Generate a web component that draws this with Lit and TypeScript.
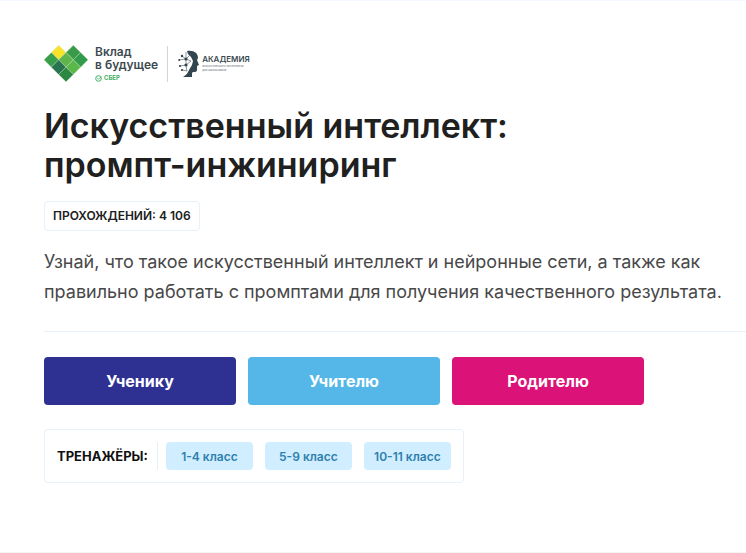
import { LitElement, html, svg, css } from "lit";
import { customElement } from "lit/decorators.js";

const CELLS: [number, number, string][] = [
  [15, 7, "#f6e32a"],
  [29, 7, "#3a9a4a"],
  [8, 14, "#3a9f4b"],
  [22, 14, "#5fb44c"],
  [36, 14, "#319a4b"],
  [15, 21, "#2a7350"],
  [29, 21, "#5ab74a"],
  [22, 28, "#2b8842"],
];

const AUDIENCE = [
  { label: "Ученику", tone: "student" },
  { label: "Учителю", tone: "teacher" },
  { label: "Родителю", tone: "parent" },
];

const TRAINERS = ["1-4 класс", "5-9 класс", "10-11 класс"];

@customElement("app-logos")
export class AppLogos extends LitElement {
  static styles = css`
    :host {
      display: flex;
      align-items: center;
      color: #3c4a50;
      font-family: Inter, "Noto Sans", sans-serif;
    }
    svg { display: block; flex: none; }
    .vklad { margin-left: 7px; font-size: 12px; line-height: 13px; font-weight: 600; }
    .sber { display: flex; align-items: center; gap: 2px; margin-top: 3px; font-size: 6px; line-height: 8px; font-weight: 700; color: #3fae62; }
    .bar { width: 1px; height: 36px; margin: 0 10px 0 9px; background: #d3d6d8; }
    .academy { margin-left: 2px; font-size: 8px; line-height: 9px; font-weight: 600; }
    .tiny { font-size: 3px; line-height: 4px; font-weight: 500; color: #7b858a; }
  `;

  render() {
    return html`
      <svg width="44" height="37" viewBox="1 0 42 35" aria-hidden="true">
        ${CELLS.map(
          ([x, y, c]) =>
            svg`<path d="M${x} ${y - 7}l7 7-7 7-7-7z" fill=${c} stroke="#cfe6c8" stroke-width=".3"></path>`
        )}
      </svg>
      <div class="vklad">
        <div>Вклад</div>
        <div>в будущее</div>
        <div class="sber">
          <svg width="7" height="7" viewBox="0 0 7 7" aria-hidden="true">
            <circle cx="3.5" cy="3.5" r="2.8" fill="none" stroke="#3fae62" stroke-width="1"></circle>
            <path d="M2 3l1.5 1L6.5 2" fill="none" stroke="#3fae62" stroke-width=".8"></path>
          </svg>
          СБЕР
        </div>
      </div>
      <div class="bar"></div>
      <svg width="22" height="28" viewBox="0 0 22 28" aria-hidden="true">
        <path d="M9 1c7-1 11 2 11 7l-1 2 2 5-2 1v4c0 2-2 2-4 2l-1 1v4H5c3-2 5-4 6-7l3-5 1-4-2-4-3-3z" fill="#33454e"></path>
        <g fill="none" stroke="#5b6a72" stroke-width=".7">
          <path d="M4 6l4 3 5-5M8 9v6l5-4M8 15l-6 1M8 15l1 6M8 9l-7 1M8 9l5 2M9 21l-5-1M8 2v7"></path>
        </g>
        <g fill="#33454e">
          <circle cx="4" cy="6" r="1.2"></circle><circle cx="8" cy="9" r="1.6"></circle>
          <circle cx="8" cy="15" r="1.6"></circle><circle cx="2" cy="16" r="1.1"></circle>
          <circle cx="1.2" cy="10" r="1"></circle><circle cx="4" cy="20" r="1.1"></circle>
        </g>
      </svg>
      <div class="academy">
        АКАДЕМИЯ
        <div class="tiny">искусственного интеллекта<br />для школьников</div>
      </div>
    `;
  }
}

@customElement("app-root")
export class AppRoot extends LitElement {
  static styles = css`
    :host {
      display: block;
      box-sizing: border-box;
      min-height: 100vh;
      border-top: 1px solid #f3f9fe;
      border-bottom: 1px solid #f4f4f4;
      background: #fff;
      color: #202020;
      font-family: Inter, "Noto Sans", sans-serif;
    }
    main { padding: 44px 0 60px 44px; }
    h1 { margin: 24px 0 0; font-size: 34px; line-height: 39px; font-weight: 600; }
    .count {
      display: inline-block;
      margin-top: 17px;
      padding: 0 8px;
      border: 1px solid #e8f1fa;
      border-radius: 4px;
      font-size: 12px;
      line-height: 28px;
      font-weight: 600;
    }
    .lead { margin: 16px 0 0; padding-right: 16px; font-size: 18px; line-height: 30px; font-weight: 400; color: #484848; }
    hr { margin: 24px 0 25px; border: 0; border-top: 1px solid #e8f1fa; }
    .row { display: flex; flex-wrap: wrap; gap: 12px; }
    button { border: 0; border-radius: 4px; font-family: inherit; cursor: pointer; }
    .big { width: 192px; height: 48px; color: #fff; font-size: 16px; font-weight: 700; }
    .student { background: #2e3092; }
    .teacher { background: #54b7e8; }
    .parent { background: #db1278; }
    .trainers {
      display: inline-flex;
      align-items: center;
      margin-top: 24px;
      padding: 12px;
      border: 1px solid #e8f1fa;
      border-radius: 4px;
    }
    .title { margin: 0 8px 0 0; padding-right: 9px; border-right: 1px solid #e8f1fa; font-size: 13px; line-height: 28px; font-weight: 700; color: #101010; }
    .chip { width: 87px; height: 28px; padding: 0; background: #d0eeff; color: #2f80ad; font-size: 12px; font-weight: 600; }
  `;

  render() {
    return html`
      <main>
        <app-logos></app-logos>
        <h1>Искусственный интеллект:<br />промпт-инжиниринг</h1>
        <div class="count">ПРОХОЖДЕНИЙ: 4 106</div>
        <p class="lead">
          Узнай, что такое искусственный интеллект и нейронные сети, а также как
          правильно работать с промптами для получения качественного результата.
        </p>
        <hr />
        <div class="row">
          ${AUDIENCE.map((a) => html`<button class="big ${a.tone}">${a.label}</button>`)}
        </div>
        <div class="trainers">
          <h2 class="title">ТРЕНАЖЁРЫ:</h2>
          <div class="row">${TRAINERS.map((t) => html`<button class="chip">${t}</button>`)}</div>
        </div>
      </main>
    `;
  }
}
